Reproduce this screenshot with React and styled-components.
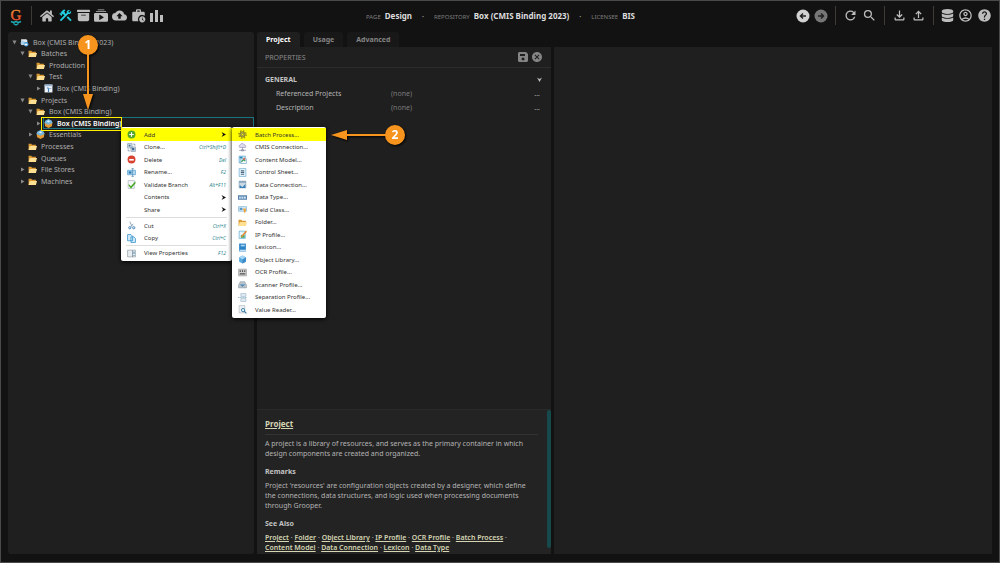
import React, {useState} from 'react';
import styled, {createGlobalStyle} from 'styled-components';
import {MdConstruction, MdWorkHistory, MdCloudUpload, MdRefresh, MdSearch, MdOutlineFileDownload, MdOutlineFileUpload, MdOutlineAccountCircle, MdHelp, MdCancel} from 'react-icons/md';
import {BsCollectionPlayFill, BsArchiveFill} from 'react-icons/bs';
import {FaHome, FaDatabase} from 'react-icons/fa';

const GlobalStyle = createGlobalStyle`
    * { box-sizing: border-box; }
    body {
        margin: 0;
        background: #121212;
        font-family: "Noto Sans", "Open Sans", sans-serif;
        font-size: 7px;
    }
    button, input {
        margin: 0;
        padding: 0;
        border: 0;
        background: none;
        font: inherit;
        color: inherit;
    }
    svg { display: block; flex: none; }
`;

const Page = styled.div`
    position: relative;
    display: flex;
    flex-direction: column;
    min-height: 100vh;
    padding: 0 7px 8px;
    border: 1px solid #4a4a4a;
    color: #b4b4b4;
`;

const TopBar = styled.header`
    display: grid;
    grid-template-columns: 1fr auto 1fr;
    align-items: center;
    height: 31px;
    padding: 0 0 2px 1px;
`;

const Tools = styled.nav`
    display: flex;
    align-items: center;
    gap: 4px;
    justify-content: ${props => props.$end ? 'flex-end' : 'flex-start'};
`;

const ToolButton = styled.button`
    display: flex;
    color: ${props => props.$color || '#bdbdbd'};
`;

const Divider = styled.span`
    width: 1px;
    height: 19px;
    margin: 0 ${props => props.$space || 3}px;
    background: #3f3b36;
`;

const Crumbs = styled.div`
    display: flex;
    align-items: baseline;
    gap: 4px;
    small { font-size: 6px; color: #7c7c7c; }
    strong { font-size: 8px; color: #dcdcdc; }
    i { margin: 0 6px; font-style: normal; font-weight: 700; color: #aaa; }
`;

const Columns = styled.main`
    flex: 1;
    display: grid;
    grid-template-columns: 246fr 294fr 438fr;
    gap: 3px;
`;

const TreePanel = styled.section`
    border-radius: 3px;
    background: #1f1f1f;
    padding: 4px 0;
`;

const Tree = styled.ul`
    margin: 0;
    padding: 0;
    list-style: none;
`;

const TreeRow = styled.li`
    display: flex;
    align-items: center;
    height: 12px;
    padding-left: ${props => 3 + props.$level * 8}px;
    color: ${props => props.$selected ? '#fff' : '#adadad'};
    font-weight: ${props => props.$selected ? 600 : 400};
    white-space: nowrap;
    &:nth-child(5n + 2), &:nth-child(5n + 4) { height: 11px; }
`;

const Toggle = styled.button`
    display: flex;
    justify-content: center;
    width: 6px;
    margin-right: 2px;
    color: #8a8a8a;
`;

const TreeLabel = styled.span`
    display: flex;
    align-items: center;
    flex: 1;
    gap: 4px;
    height: 100%;
    padding-left: 1px;
    box-shadow: ${props => props.$selected ? 'inset 0 0 0 1px #1a7480' : 'none'};
`;

const Middle = styled.section`
    display: flex;
    flex-direction: column;
`;

const Tabs = styled.div`
    display: flex;
    gap: 4px;
    height: 15px;
`;

const Tab = styled.button`
    padding: 0 9px;
    border-radius: 3px 3px 0 0;
    font-weight: 700;
    background: ${props => props.$active ? '#1f1f1f' : '#181818'};
    color: ${props => props.$active ? '#fff' : '#848484'};
`;

const Properties = styled.div`
    flex: 1;
    background: #1f1f1f;
`;

const PropertiesBar = styled.div`
    display: flex;
    align-items: center;
    gap: 3px;
    height: 21px;
    padding: 0 8px;
    border-bottom: 1px solid #2c2c2c;
    color: #8a8a8a;
    span { flex: 1; }
`;

const GroupTitle = styled.div`
    display: flex;
    justify-content: space-between;
    align-items: center;
    height: 13px;
    margin-top: 5px;
    padding: 0 9px 0 8px;
    font-weight: 700;
    color: #c4c4c4;
`;

const Field = styled.div`
    display: grid;
    grid-template-columns: 115px 1fr auto;
    align-items: center;
    height: 14px;
    padding: 0 11px 0 19px;
    input { color: #7b7b7b; min-width: 0; }
`;

const Help = styled.div`
    display: flex;
    height: 145px;
    border-top: 1px solid #2a2a2a;
    background: #232323;
`;

const HelpText = styled.article`
    flex: 1;
    padding: 8px 9px 0 8px;
    line-height: 10px;
    h2 {
        margin: 0 0 4px;
        padding: 1px 0 5px;
        border-bottom: 1px solid #333;
        font-size: 8px;
        line-height: 10px;
    }
    h3 { margin: 8px 0 4px; font-size: 7px; line-height: 10px; color: #c4c4c4; }
    p { margin: 0; }
`;

const HelpThumb = styled.div`
    width: 4px;
    margin-bottom: 6px;
    border-radius: 2px;
    background: #15494c;
`;

const HelpLink = styled.a`
    display: inline-block;
    color: #d6d6b4;
    font-weight: ${props => props.$title ? 700 : 600};
    text-decoration: underline;
`;

const Blank = styled.section`
    margin-top: 15px;
    background: #1f1f1f;
`;

const Menu = styled.div`
    position: absolute;
    top: 126px;
    left: ${props => props.$left}px;
    width: ${props => props.$width}px;
    padding: 1px 0 2px;
    border-radius: 2px;
    background: #fff;
    box-shadow: 0 1px 4px #000;
    font-size: 6px;
    white-space: nowrap;
`;

const MenuItem = styled.button`
    display: grid;
    grid-template-columns: 9px 1fr auto;
    align-items: center;
    column-gap: 8px;
    width: 100%;
    height: 13px;
    padding: 0 6px;
    text-align: left;
    color: #333;
    background: ${props => props.$marked ? '#ffff00' : 'none'};
    &:nth-child(even) { height: 12px; }
    em { font-size: 5px; color: #2a7f8c; }
`;

const MenuLine = styled.hr`
    margin: 1px 5px;
    border: 0;
    border-top: 1px solid #ddd;
`;

const Frame = styled.div`
    position: absolute;
    left: 40px;
    top: 116px;
    width: 81px;
    height: 14px;
    border: 1px solid #ffee00;
`;

const Callout = styled.svg`
    position: absolute;
    left: ${props => props.$x}px;
    top: ${props => props.$y}px;
    filter: drop-shadow(1px 1px 1px #000);
    text { font-weight: 700; font-size: 12px; }
`;

const drawings = {
    folder: <><path d="M1 3h5l1 2h7v9H1z" fill="#d99a33" /><path d="M3 7h13l-2 7H1z" fill="#ffe093" /></>,
    repo: <><path d="M2 2h9l2 2v8H2z" fill="#dfe9ef" /><circle cx="5" cy="9" r="4" fill="#a9cfe8" /><circle cx="11" cy="11" r="4" fill="#3e94d0" /><path d="M8 10h5v3H8z" fill="#fff" /></>,
    batch: <><path d="M1 1h14v14H1z" fill="#eef4fa" /><path d="M1 1h14v3H1z" fill="#98b5d4" /><path d="M5 6h3v2H5zm4 1h4v1H9zM7 8h2v6H7z" fill="#3d79b5" /></>,
    project: <><path d="M1 6h14l-1 7-6 3-6-3z" fill="#e39a36" /><path d="M2 3l6-3 6 3 1 4-7 3-7-3z" fill="#75b7dc" /><path d="M5 4l3-2 3 2-3 2z" fill="#d6effa" /></>,
    add: <><circle cx="8" cy="8" r="7" fill="#56a62b" /><path d="M7 4h2v3h3v2H9v3H7V9H4V7h3z" fill="#fff" /></>,
    clone: <><path d="M1 1h8v8H1zM7 7h8v8H7z" fill="#d6e0ea" stroke="#6d87a0" /><path d="M3 3h3v3H3zm6 6h4v4H9z" fill="#3b648e" /><path d="M11 2h3v3M2 11v3h3" fill="none" stroke="#486d91" /></>,
    remove: <><circle cx="8" cy="8" r="7" fill="#d8402f" /><path d="M4 7h8v3H4z" fill="#fff" /></>,
    rename: <><path d="M1 4h14v8H1z" fill="#b5dbf3" stroke="#328bc4" /><path d="M3 6h5v4H3z" fill="#2979b5" /><path d="M8 1h4M10 1v14M8 15h4" stroke="#336e9c" fill="none" /></>,
    validate: <><path d="M2 1h11v14H2z" fill="#f3f5f7" stroke="#9aa6b0" /><path d="M3 7l4 4 8-9v4l-8 9-4-5z" fill="#40a51f" /></>,
    cut: <><path d="M5 1l4 9M11 5l-4 5" stroke="#7f9aae" strokeWidth="1.5" /><circle cx="5" cy="12" r="2" fill="none" stroke="#2d72ac" strokeWidth="1.5" /><circle cx="12" cy="12" r="2" fill="none" stroke="#2d72ac" strokeWidth="1.5" /></>,
    copy: <path d="M1 1h6l3 3v8H1zM7 5h5l3 3v7H7z" fill="#d4edfc" stroke="#3592cb" strokeWidth="1.4" />,
    view: <><path d="M1 2h14v12H1z" fill="#e8edf1" stroke="#7b8c99" /><path d="M9 2h1v12H9z" fill="#5a6e7e" /><path d="M11 5h3v1h-3zm0 3h3v1h-3zm0 3h3v1h-3z" fill="#38759e" /></>,
    gear: <><circle cx="8" cy="8" r="6.5" fill="none" stroke="#8f8a20" strokeWidth="2.4" strokeDasharray="2.6 2.5" /><circle cx="8" cy="8" r="4.6" fill="#b5b05a" stroke="#77721e" strokeWidth="1.5" /><circle cx="8" cy="8" r="1.8" fill="#ffff00" stroke="#77721e" /></>,
    cmis: <><path d="M3 8a3 3 0 0 1 1-5 4 4 0 0 1 7 0 3 3 0 0 1 2 5z" fill="#ded9ef" stroke="#8b85a5" /><path d="M8 8v4M2 13h12M6 12h4v2H6z" stroke="#6f7390" fill="none" /></>,
    model: <><path d="M2 2h11v12H2z" fill="#cfe8f6" stroke="#3991c5" /><path d="M5 7h10v8H5z" fill="#f6fafc" stroke="#589dbc" /><path d="M6 12l4-4 3 3" stroke="#2e9554" fill="none" strokeWidth="2" /><path d="M3 3h5v3H3z" fill="#2f87bd" /><circle cx="11" cy="7" r="2" fill="#d66b57" /></>,
    sheet: <><path d="M2 1h12v14H2z" fill="#e7f5fd" stroke="#4e9bc7" /><path d="M5 4h6v2H5zm0 3h6v2H5zm0 3h6v2H5z" fill="#49687e" /></>,
    data: <><path d="M2 2h12v12H2z" fill="#ccd9e4" stroke="#7590a5" /><path d="M2 2h12v3H2z" fill="#86a5bc" /><path d="M3 9l5 4 5-6v7H3z" fill="#347fba" /></>,
    type: <><path d="M0 4h16v8H0z" fill="#557fa9" /><path d="M2 6h3v4H2zm4 0h3v4H6zm4 0h4v4h-4z" fill="#c6dff3" /></>,
    field: <><path d="M1 3h14v8H1z" fill="#e1f0fa" stroke="#529dc9" /><path d="M3 5h5v4H3z" fill="#5798c5" /><path d="M9 6h5v4l-2 5-2-5z" fill="#eba33c" /></>,
    ip: <><path d="M2 2h11v13H2z" fill="#e8f5fc" stroke="#419ac4" /><path d="M5 9h7v5H5z" fill="#52aa72" /><path d="M14 1l2 2-8 9-3 1 1-3z" fill="#df8e34" /></>,
    lexicon: <><path d="M2 1h12v14H2z" fill="#2d83c7" /><path d="M5 3h7v3H5z" fill="#a9d7f5" /><path d="M3 12h11v2H3z" fill="#d6edfb" /></>,
    cube: <><path d="M8 1l6 3v8l-6 3-6-3V4z" fill="#58a9df" /><path d="M8 1l6 3-6 4-6-4z" fill="#a7d7f5" /><path d="M8 8l6-4v8l-6 3z" fill="#3c8cca" /></>,
    ocr: <><path d="M1 2h14v12H1z" fill="#d1d1d1" stroke="#8b8b8b" /><path d="M3 4h2v3H3zm4 0h2v3H7zm4 0h2v3h-2zM3 9h10v1H3zm0 2h10v1H3z" fill="#505050" /></>,
    scanner: <><path d="M4 3h8l3 6v5H1V9z" fill="#b9c4cd" stroke="#8797a4" /><path d="M3 8h10l-5 4z" fill="#4b87b5" /></>,
    separation: <><path d="M5 1h9v5H5zM5 10h9v5H5z" fill="#e3eef6" stroke="#8faabe" /><path d="M0 8h16" stroke="#3f81ae" strokeDasharray="2 1" /></>,
    reader: <><path d="M2 1h10v13H2z" fill="#eef2f5" stroke="#a3adb5" /><circle cx="9" cy="9" r="3" fill="#d5edfa" stroke="#34779f" strokeWidth="1.5" /><path d="M11 11l4 4" stroke="#34779f" strokeWidth="2" /></>,
};

const Icon = ({name}) => (
    <svg width="9" height="9" viewBox="0 0 16 16" aria-hidden="true">{drawings[name]}</svg>
);

const tree = [
    {level: 0, open: true, icon: 'repo', label: 'Box (CMIS Binding 2023)'},
    {level: 1, open: true, icon: 'folder', label: 'Batches'},
    {level: 2, icon: 'folder', label: 'Production'},
    {level: 2, open: true, icon: 'folder', label: 'Test'},
    {level: 3, open: false, icon: 'batch', label: 'Box (CMIS Binding)'},
    {level: 1, open: true, icon: 'folder', label: 'Projects'},
    {level: 2, open: true, icon: 'folder', label: 'Box (CMIS Binding)'},
    {level: 3, open: false, icon: 'project', label: 'Box (CMIS Binding)', selected: true},
    {level: 2, open: false, icon: 'project', label: 'Essentials'},
    {level: 1, icon: 'folder', label: 'Processes'},
    {level: 1, icon: 'folder', label: 'Queues'},
    {level: 1, open: false, icon: 'folder', label: 'File Stores'},
    {level: 1, open: false, icon: 'folder', label: 'Machines'},
];

const nodeMenu = [
    {icon: 'add', label: 'Add', more: true, marked: true},
    {icon: 'clone', label: 'Clone...', keys: 'Ctrl+Shift+D'},
    {icon: 'remove', label: 'Delete', keys: 'Del'},
    {icon: 'rename', label: 'Rename...', keys: 'F2'},
    {icon: 'validate', label: 'Validate Branch', keys: 'Alt+F11'},
    {label: 'Contents', more: true},
    {label: 'Share', more: true},
    {line: true},
    {icon: 'cut', label: 'Cut', keys: 'Ctrl+X'},
    {icon: 'copy', label: 'Copy', keys: 'Ctrl+C'},
    {line: true},
    {icon: 'view', label: 'View Properties', keys: 'F12'},
];

const addMenu = [
    ['gear', 'Batch Process...'],
    ['cmis', 'CMIS Connection...'],
    ['model', 'Content Model...'],
    ['sheet', 'Control Sheet...'],
    ['data', 'Data Connection...'],
    ['type', 'Data Type...'],
    ['field', 'Field Class...'],
    ['folder', 'Folder...'],
    ['ip', 'IP Profile...'],
    ['lexicon', 'Lexicon...'],
    ['cube', 'Object Library...'],
    ['ocr', 'OCR Profile...'],
    ['scanner', 'Scanner Profile...'],
    ['separation', 'Separation Profile...'],
    ['reader', 'Value Reader...'],
];

const seeAlso = ['Project', 'Folder', 'Object Library', 'IP Profile', 'OCR Profile', 'Batch Process', 'Content Model', 'Data Connection', 'Lexicon', 'Data Type'];

const Logo = () => (
    <svg width="14" height="22" viewBox="0 -3 14 22" aria-label="Grooper">
        <defs>
            <linearGradient id="flame" x1="0" y1="0" x2="0" y2="1">
                <stop offset="0" stopColor="#f5a033" />
                <stop offset="1" stopColor="#e0382b" />
            </linearGradient>
        </defs>
        <text x="7" y="12" textAnchor="middle" fontFamily="Liberation Serif, serif" fontSize="15" stroke="url(#flame)" strokeWidth=".4" fill="url(#flame)">G</text>
        <path d="M2 13.500l2.500 1L7 13.500l2.500 1 2.500-1M4.500 15.500l2.500 1.500 2.500-1.500" fill="none" stroke="#1eaeb5" strokeWidth="1.400" />
    </svg>
);

const Chevron = ({down, color}) => (
    <svg width="5" height="5" viewBox="0 0 10 10" aria-hidden="true">
        <path d={down ? 'M0 1l5 3 5-3-5 9z' : 'M1 0l9 5-9 5 3-5z'} fill={color} />
    </svg>
);

const Triangle = ({open}) => (
    <svg width="5" height="5" viewBox="0 0 10 10" aria-hidden="true">
        <path d={open ? 'M1 1h8L5 9z' : 'M2 1l7 4-7 4z'} fill="currentColor" />
    </svg>
);

export default function App() {
    const [tab, setTab] = useState('Project');

    return (
        <Page>
            <GlobalStyle />
            <TopBar>
                <Tools>
                    <Logo />
                    <Divider $space={4} />
                    <ToolButton aria-label="Home"><FaHome size={14} /></ToolButton>
                    <ToolButton aria-label="Design" $color="#22cfe0"><MdConstruction size={15} /></ToolButton>
                    <ToolButton aria-label="Batches"><BsArchiveFill size={13} /></ToolButton>
                    <ToolButton aria-label="Tasks"><BsCollectionPlayFill size={14} /></ToolButton>
                    <ToolButton aria-label="Imports"><MdCloudUpload size={15} /></ToolButton>
                    <ToolButton aria-label="Jobs"><MdWorkHistory size={15} /></ToolButton>
                    <ToolButton aria-label="Stats">
                        <svg width="13" height="14" viewBox="0 0 13 14"><path d="M0 4h3v9H0zM5 1h3v12H5zM10 6h3v7h-3z" fill="currentColor" /></svg>
                    </ToolButton>
                </Tools>
                <Crumbs>
                    <small>PAGE</small><strong>Design</strong><i>·</i>
                    <small>REPOSITORY</small><strong>Box (CMIS Binding 2023)</strong><i>·</i>
                    <small>LICENSEE</small><strong>BIS</strong>
                </Crumbs>
                <Tools $end>
                    <ToolButton aria-label="Back">
                        <svg width="14" height="14" viewBox="0 0 14 14"><circle cx="7" cy="7" r="6.500" fill="#d2d2d2" /><path d="M10 7H5M7 4.500L4.500 7 7 9.500" fill="none" stroke="#222" strokeWidth="1.500" /></svg>
                    </ToolButton>
                    <ToolButton aria-label="Forward">
                        <svg width="14" height="14" viewBox="0 0 14 14"><circle cx="7" cy="7" r="6.500" fill="#777" /><path d="M4 7h5M7 4.500L9.500 7 7 9.500" fill="none" stroke="#222" strokeWidth="1.500" /></svg>
                    </ToolButton>
                    <Divider />
                    <ToolButton aria-label="Refresh"><MdRefresh size={15} /></ToolButton>
                    <ToolButton aria-label="Search"><MdSearch size={15} /></ToolButton>
                    <Divider />
                    <ToolButton aria-label="Download"><MdOutlineFileDownload size={15} /></ToolButton>
                    <ToolButton aria-label="Upload"><MdOutlineFileUpload size={15} /></ToolButton>
                    <Divider />
                    <ToolButton aria-label="Repositories"><FaDatabase size={13} /></ToolButton>
                    <ToolButton aria-label="Account"><MdOutlineAccountCircle size={15} /></ToolButton>
                    <ToolButton aria-label="Help"><MdHelp size={15} /></ToolButton>
                </Tools>
            </TopBar>

            <Columns>
                <TreePanel>
                    <Tree>
                        {tree.map((node, index) => (
                            <TreeRow key={index} $level={node.level} $selected={node.selected}>
                                <Toggle aria-label="Toggle">{node.open !== undefined && <Triangle open={node.open} />}</Toggle>
                                <TreeLabel $selected={node.selected}>
                                    <Icon name={node.icon} />
                                    {node.label}
                                </TreeLabel>
                            </TreeRow>
                        ))}
                    </Tree>
                </TreePanel>

                <Middle>
                    <Tabs>
                        {['Project', 'Usage', 'Advanced'].map(name => (
                            <Tab key={name} $active={tab === name} onClick={() => setTab(name)}>{name}</Tab>
                        ))}
                    </Tabs>
                    <Properties>
                        <PropertiesBar>
                            <span>PROPERTIES</span>
                            <ToolButton aria-label="Save" $color="#858585">
                                <svg width="10" height="10" viewBox="0 0 10 10"><path fillRule="evenodd" d="M1 0h7l2 2v7l-1 1H1L0 9V1zm1 2v2h5V2zm3 3.500a1.500 1.500 0 1 0 .1 0z" fill="currentColor" /></svg>
                            </ToolButton>
                            <ToolButton aria-label="Cancel" $color="#858585"><MdCancel size={12} /></ToolButton>
                        </PropertiesBar>
                        <GroupTitle>GENERAL<Chevron down color="#bbb" /></GroupTitle>
                        <Field>
                            <label htmlFor="projects">Referenced Projects</label>
                            <input id="projects" defaultValue="(none)" />
                            <button aria-label="Choose projects">...</button>
                        </Field>
                        <Field>
                            <label htmlFor="description">Description</label>
                            <input id="description" defaultValue="(none)" />
                            <button aria-label="Edit description">...</button>
                        </Field>
                    </Properties>
                    <Help>
                        <HelpText>
                            <h2><HelpLink $title href="#project">Project</HelpLink></h2>
                            <p>A project is a library of resources, and serves as the primary container in which design components are created and organized.</p>
                            <h3>Remarks</h3>
                            <p>Project 'resources' are configuration objects created by a designer, which define the connections, data structures, and logic used when processing documents through Grooper.</p>
                            <h3>See Also</h3>
                            <p>
                                {seeAlso.map((name, index) => (
                                    <React.Fragment key={name}>
                                        <HelpLink href="#help">{name}</HelpLink>{index < seeAlso.length - 1 && ' · '}
                                    </React.Fragment>
                                ))}
                            </p>
                        </HelpText>
                        <HelpThumb />
                    </Help>
                </Middle>

                <Blank />
            </Columns>

            <Menu $left={120} $width={111}>
                {nodeMenu.map((item, index) => item.line ? <MenuLine key={index} /> : (
                    <MenuItem key={index} $marked={item.marked}>
                        {item.icon ? <Icon name={item.icon} /> : <span />}
                        <span>{item.label}</span>
                        {item.more ? <Chevron color="#111" /> : <em>{item.keys}</em>}
                    </MenuItem>
                ))}
            </Menu>
            <Menu $left={231} $width={94}>
                {addMenu.map(([icon, label], index) => (
                    <MenuItem key={label} $marked={index === 0}>
                        <Icon name={icon} />
                        <span>{label}</span>
                    </MenuItem>
                ))}
            </Menu>

            <Frame />
            <Callout $x={75} $y={33} width="24" height="78" viewBox="0 0 24 78">
                <path d="M11 18h2v42h4l-5 16-5-16h4z" fill="#f7941d" />
                <circle cx="12" cy="11" r="10" fill="#f7941d" />
                <text x="12" y="15" textAnchor="middle" fill="#fff">1</text>
            </Callout>
            <Callout $x={328} $y={122} width="78" height="24" viewBox="0 0 78 24">
                <path d="M2 12l16-5v4h40v2H18v4z" fill="#f7941d" />
                <circle cx="66" cy="12" r="10" fill="#f7941d" />
                <text x="66" y="16" textAnchor="middle" fill="#fff">2</text>
            </Callout>
        </Page>
    );
}
